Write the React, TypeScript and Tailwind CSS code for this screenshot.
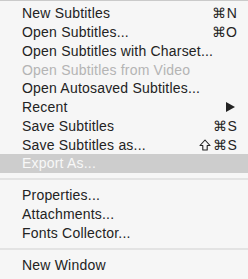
import React from "react";

type Item =
  | { kind: "item"; label: string; shortcut?: string; disabled?: boolean; submenu?: boolean; highlighted?: boolean }
  | { kind: "sep" };

const items: Item[] = [
  { kind: "item", label: "New Subtitles", shortcut: "⌘N" },
  { kind: "item", label: "Open Subtitles...", shortcut: "⌘O" },
  { kind: "item", label: "Open Subtitles with Charset..." },
  { kind: "item", label: "Open Subtitles from Video", disabled: true },
  { kind: "item", label: "Open Autosaved Subtitles..." },
  { kind: "item", label: "Recent", submenu: true },
  { kind: "item", label: "Save Subtitles", shortcut: "⌘S" },
  { kind: "item", label: "Save Subtitles as...", shortcut: "⇧⌘S" },
  { kind: "item", label: "Export As...", highlighted: true },
  { kind: "sep" },
  { kind: "item", label: "Properties..." },
  { kind: "item", label: "Attachments..." },
  { kind: "item", label: "Fonts Collector..." },
  { kind: "sep" },
  { kind: "item", label: "New Window" },
];

export default function App() {
  return (
    <div
      className="w-[248px] h-[279px] bg-[#f6f6f6] border-t border-[#cacaca] overflow-hidden pt-[3px] text-[14px] tracking-[0.2px] text-[#232323]"
      style={{ fontFamily: '"Liberation Sans", Arial, sans-serif' }}
    >
      {items.map((it, i) =>
        it.kind === "sep" ? (
          <div key={i} className="h-[13.25px] flex flex-col justify-center">
            <div className="h-[2px] bg-[#e3e3e3]" />
          </div>
        ) : (
          <div
            key={i}
            className={
              "h-[18.75px] flex items-center pl-[22px] pr-[11px] leading-none " +
              (it.highlighted ? "bg-[#cdcdcd] text-[#f8f8f8] " : "") +
              (it.disabled ? "text-[#b4b4b4] " : "")
            }
          >
            <span className="flex-1 whitespace-nowrap">{it.label}</span>
            {it.shortcut && (
              <span className="whitespace-nowrap flex items-center">
                {it.shortcut.startsWith("⇧") ? (
                  <>
                    <svg width="12" height="12" viewBox="0 0 12 12" className="mr-[2px]">
                      <path d="M6 1 L11 6.5 L8.2 6.5 L8.2 11 L3.8 11 L3.8 6.5 L1 6.5 Z" fill="none" stroke="#232323" strokeWidth="1.1" strokeLinejoin="round" />
                    </svg>
                    {it.shortcut.slice(1)}
                  </>
                ) : (
                  it.shortcut
                )}
              </span>
            )}
            {it.submenu && (
              <svg width="9" height="10" viewBox="0 0 9 10" className="mr-[2px]">
                <path d="M0 0 L9 5 L0 10 Z" fill="#232323" />
              </svg>
            )}
          </div>
        )
      )}
    </div>
  );
}
